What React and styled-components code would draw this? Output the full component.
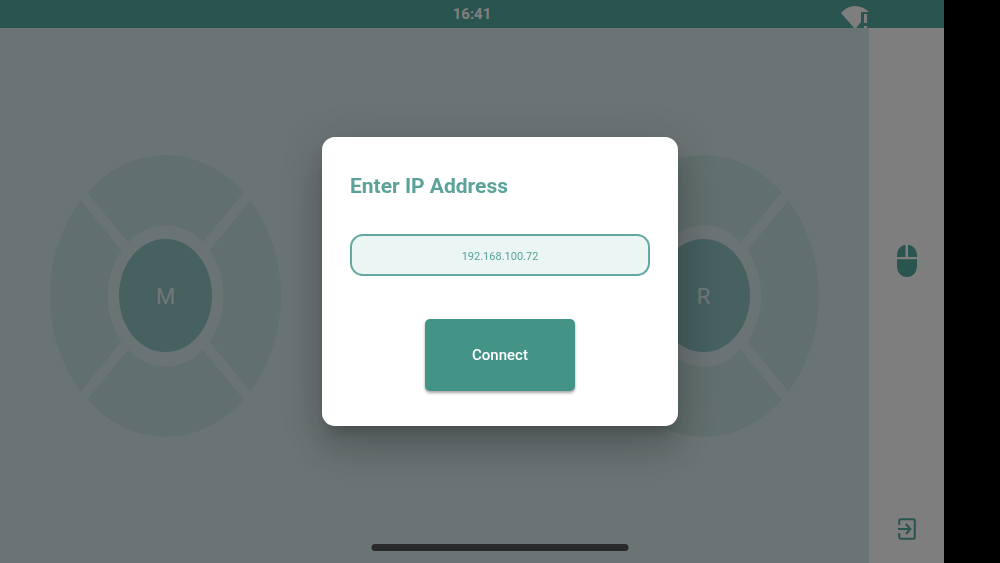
import React from "react";
import styled, { createGlobalStyle } from "styled-components";

const GlobalStyle = createGlobalStyle`
  * { box-sizing: border-box; }
  body {
    margin: 0;
    background: #000;
    font-family: Roboto, "Liberation Sans", sans-serif;
  }
  button, input { font-family: inherit; }
`;

const Screen = styled.div`
  display: flex;
  flex-direction: column;
  min-height: 100vh;
  margin-right: 56px;
`;

const StatusBar = styled.header`
  display: grid;
  grid-template-columns: 1fr auto 1fr;
  align-items: center;
  height: 28px;
  background: #54a89e;
  color: #fff;
  overflow: hidden;
`;

const Time = styled.time`
  grid-column: 2;
  font-size: 15px;
  line-height: 28px;
  font-weight: 700;
`;

const Signal = styled.svg`
  justify-self: end;
  width: 28px;
  height: 28px;
  margin-right: 75px;
`;

const Body = styled.div`
  display: flex;
  flex: 1;
`;

const Pads = styled.main`
  display: flex;
  flex: 1;
  align-items: center;
  justify-content: space-between;
  padding: 0 50px;
  background: #d7e8ea;
`;

const PadRoot = styled.div`
  display: grid;
  place-items: center;
  width: 231px;
  height: 282px;
`;

const PadRing = styled.svg`
  grid-area: 1 / 1;
  width: 100%;
  height: 100%;
`;

const PadButton = styled.button`
  grid-area: 1 / 1;
  width: 40%;
  height: 40%;
  padding: 2px 0 0;
  border: 0;
  border-radius: 50%;
  background: #8cc2bf;
  color: #e4eeee;
  font-size: 22px;
`;

const Sidebar = styled.nav`
  display: flex;
  flex-direction: column;
  align-items: center;
  justify-content: space-between;
  width: 75px;
  padding: 217px 0 23px;
  background: #fefcfc;
`;

const IconButton = styled.button`
  display: flex;
  padding: 0;
  border: 0;
  background: none;
  color: #54a89e;
`;

const Overlay = styled.div`
  position: fixed;
  inset: 0;
  display: grid;
  place-items: center;
  background: rgba(0, 0, 0, 0.5);
`;

const Dialog = styled.form`
  display: flex;
  flex-direction: column;
  width: 356px;
  max-width: 90%;
  padding: 35px 28px;
  border-radius: 13px;
  background: #fff;
  box-shadow:
    0 11px 15px -7px rgba(0, 0, 0, 0.2),
    0 24px 38px 3px rgba(0, 0, 0, 0.14),
    0 9px 46px 8px rgba(0, 0, 0, 0.12);
`;

const Title = styled.label`
  margin-bottom: 34px;
  color: #5ba39a;
  font-size: 21px;
  line-height: 28px;
  font-weight: 700;
`;

const AddressInput = styled.input`
  width: 100%;
  height: 42px;
  margin-bottom: 43px;
  padding: 2px 12px 0;
  border: 2px solid #64a9a1;
  border-radius: 13px;
  outline: 0;
  background: #eaf5f4;
  color: #5ba39a;
  font-size: 11px;
  text-align: center;
`;

const ConnectButton = styled.button`
  align-self: center;
  width: 150px;
  height: 72px;
  border: 0;
  border-radius: 5px;
  background: #439386;
  color: #fff;
  font-size: 15px;
  font-weight: 500;
  box-shadow: 0 2px 3px rgba(0, 0, 0, 0.35);
`;

const HomeIndicator = styled.div`
  position: fixed;
  bottom: 12px;
  left: 50%;
  width: 257px;
  height: 7px;
  border-radius: 4px;
  background: #29292b;
  transform: translateX(-50%);
`;

function DirectionPad({ label }) {
  return (
    <PadRoot>
      <PadRing viewBox="-100 -100 200 200" preserveAspectRatio="none" aria-hidden="true">
        <circle r="100" fill="#c3dfdc" />
        <path d="M-75-75 75 75M75-75-75 75" stroke="#d7e8ea" strokeWidth="8" />
        <circle r="50" fill="#d7e8ea" />
      </PadRing>
      <PadButton type="button">{label}</PadButton>
    </PadRoot>
  );
}

function SignalIcon() {
  return (
    <Signal viewBox="0 0 28 28" role="img" aria-label="Wi-Fi warning">
      <path d="M0 13Q6 6 14 6T28 12H20V22L15 28H13Z" fill="#fefcfc" />
      <path d="M23 14h3v9h-3zM23 26h3v2h-3z" fill="#fefcfc" />
    </Signal>
  );
}

function MouseIcon() {
  return (
    <svg width="20" height="32" viewBox="0 0 20 32" fill="currentColor" aria-hidden="true">
      <path d="M8.5 0v12H0v-1.500C0 4.800 3.500.5 8.500 0zM11 0c5.500.5 9 4.800 9 10.500V12h-9zM0 14.300h20V21c0 6.500-4.300 11-10 11S0 27.500 0 21z" />
    </svg>
  );
}

function ExitIcon() {
  return (
    <svg width="18" height="22" viewBox="0 0 18 22" fill="none" stroke="currentColor" strokeWidth="2" aria-hidden="true">
      <path d="M1.200 7V3q0-1.800 1.600-1.800h12.400q1.600 0 1.600 1.800v16q0 1.800-1.600 1.800H2.800Q1.200 20.800 1.200 19v-4" />
      <path d="M0 11h12M8 6l4.300 5L8 16" />
    </svg>
  );
}

export default function App() {
  return (
    <>
      <GlobalStyle />
      <Screen>
        <StatusBar>
          <Time>16:41</Time>
          <SignalIcon />
        </StatusBar>
        <Body>
          <Pads>
            <DirectionPad label="M" />
            <DirectionPad label="R" />
          </Pads>
          <Sidebar>
            <IconButton type="button" aria-label="Mouse">
              <MouseIcon />
            </IconButton>
            <IconButton type="button" aria-label="Exit">
              <ExitIcon />
            </IconButton>
          </Sidebar>
        </Body>
      </Screen>
      <Overlay>
        <Dialog role="dialog" aria-modal="true" onSubmit={(e) => e.preventDefault()}>
          <Title htmlFor="ip-address">Enter IP Address</Title>
          <AddressInput id="ip-address" type="text" defaultValue="192.168.100.72" />
          <ConnectButton type="submit">Connect</ConnectButton>
        </Dialog>
      </Overlay>
      <HomeIndicator />
    </>
  );
}
